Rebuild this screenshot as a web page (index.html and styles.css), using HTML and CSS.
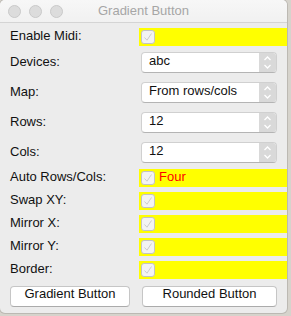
FILE: index.html
```html
<!DOCTYPE html>
<html>
<head>
<meta charset="utf-8">
<link rel="stylesheet" href="styles.css">
</head>
<body>
<div class="window">
  <div class="titlebar">
    <div class="lights"><span class="light"></span><span class="light"></span><span class="light"></span></div>
    <div class="title">Gradient Button</div>
    <div></div>
  </div>
  <div class="form">
    <div class="row row-check first">
      <div class="label">Enable Midi:</div>
      <div class="band"><span class="checkbox"><svg width="14" height="14" viewBox="0 0 14 14"><path d="M3.5 7.5 L6 10.2 L10.5 3.5" fill="none" stroke="#cdcdcd" stroke-width="1"/></svg></span></div>
    </div>
    <div class="row row-popup after-check">
      <div class="label">Devices:</div>
      <div class="popup"><span class="popup-text">abc</span><span class="stepper"><svg width="17" height="19" viewBox="0 0 17 19"><path d="M5.5 7 L8.5 4 L11.5 7 M5.5 12 L8.5 15 L11.5 12" fill="none" stroke="#ffffff" stroke-width="1.3"/></svg></span></div>
    </div>
    <div class="row row-popup">
      <div class="label">Map:</div>
      <div class="popup"><span class="popup-text">From rows/cols</span><span class="stepper"><svg width="17" height="19" viewBox="0 0 17 19"><path d="M5.5 7 L8.5 4 L11.5 7 M5.5 12 L8.5 15 L11.5 12" fill="none" stroke="#ffffff" stroke-width="1.3"/></svg></span></div>
    </div>
    <div class="row row-popup">
      <div class="label">Rows:</div>
      <div class="popup"><span class="popup-text">12</span><span class="stepper"><svg width="17" height="19" viewBox="0 0 17 19"><path d="M5.5 7 L8.5 4 L11.5 7 M5.5 12 L8.5 15 L11.5 12" fill="none" stroke="#ffffff" stroke-width="1.3"/></svg></span></div>
    </div>
    <div class="row row-popup">
      <div class="label">Cols:</div>
      <div class="popup"><span class="popup-text">12</span><span class="stepper"><svg width="17" height="19" viewBox="0 0 17 19"><path d="M5.5 7 L8.5 4 L11.5 7 M5.5 12 L8.5 15 L11.5 12" fill="none" stroke="#ffffff" stroke-width="1.3"/></svg></span></div>
    </div>
    <div class="row row-check after-popup">
      <div class="label">Auto Rows/Cols:</div>
      <div class="band"><span class="checkbox"><svg width="14" height="14" viewBox="0 0 14 14"><path d="M3.5 7.5 L6 10.2 L10.5 3.5" fill="none" stroke="#cdcdcd" stroke-width="1"/></svg></span><span class="band-text">Four</span></div>
    </div>
    <div class="row row-check">
      <div class="label">Swap XY:</div>
      <div class="band"><span class="checkbox"><svg width="14" height="14" viewBox="0 0 14 14"><path d="M3.5 7.5 L6 10.2 L10.5 3.5" fill="none" stroke="#cdcdcd" stroke-width="1"/></svg></span></div>
    </div>
    <div class="row row-check">
      <div class="label">Mirror X:</div>
      <div class="band"><span class="checkbox"><svg width="14" height="14" viewBox="0 0 14 14"><path d="M3.5 7.5 L6 10.2 L10.5 3.5" fill="none" stroke="#cdcdcd" stroke-width="1"/></svg></span></div>
    </div>
    <div class="row row-check">
      <div class="label">Mirror Y:</div>
      <div class="band"><span class="checkbox"><svg width="14" height="14" viewBox="0 0 14 14"><path d="M3.5 7.5 L6 10.2 L10.5 3.5" fill="none" stroke="#cdcdcd" stroke-width="1"/></svg></span></div>
    </div>
    <div class="row row-check">
      <div class="label">Border:</div>
      <div class="band"><span class="checkbox"><svg width="14" height="14" viewBox="0 0 14 14"><path d="M3.5 7.5 L6 10.2 L10.5 3.5" fill="none" stroke="#cdcdcd" stroke-width="1"/></svg></span></div>
    </div>
    <div class="buttons">
      <div class="button btn-gradient">Gradient Button</div>
      <div class="button btn-rounded">Rounded Button</div>
    </div>
  </div>
</div>
</body>
</html>
```

FILE: styles.css
```css
html, body {
  margin: 0;
  padding: 0;
}
body {
  width: 291px;
  height: 316px;
  background: #d6d3cc;
  font-family: "Liberation Sans", Arial, sans-serif;
  font-size: 13px;
  color: #111;
  overflow: hidden;
}
.window {
  width: 287px;
  height: 313px;
  background: #ececec;
  border-radius: 5px 5px 5px 5px;
  overflow: hidden;
  box-shadow: 0 0 0 1px rgba(0,0,0,0.12);
  display: flex;
  flex-direction: column;
}
.titlebar {
  height: 22px;
  background: linear-gradient(#f7f7f7, #f1f1f1);
  border-bottom: 1px solid #d4d4d4;
  display: grid;
  grid-template-columns: 1fr auto 1fr;
  align-items: center;
}
.lights {
  display: flex;
  gap: 8px;
  padding-left: 8px;
}
.light {
  width: 11px;
  height: 11px;
  border-radius: 50%;
  background: #dcdcdc;
  border: 0.5px solid #c9c9c9;
}
.title {
  color: #a6a6a6;
  font-size: 13px;
  line-height: 16px;
}
.form {
  display: flex;
  flex-direction: column;
  padding-top: 5px;
}
.row {
  display: grid;
  grid-template-columns: 139px 1fr;
  margin-top: 5px;
}
.row.first { margin-top: 0; }
.row.after-check { margin-top: 6px; }
.row.after-popup { margin-top: 6px; }
.row-popup { margin-top: 9px; height: 21px; }
.row-check { height: 18px; }
.label {
  padding-left: 10px;
  line-height: 15px;
  white-space: nowrap;
}
.row-popup .label {
  line-height: 19px;
}
.band {
  background: #ffff00;
  display: flex;
  align-items: flex-start;
}
.checkbox {
  width: 14px;
  height: 14px;
  margin: 2px 0 0 2px;
  box-sizing: border-box;
  border: 1px solid #c3c3c3;
  border-radius: 3px;
  background: #f3f3f3;
  display: flex;
}
.checkbox svg {
  margin: -1px;
}
.band-text {
  color: #ff0000;
  margin-left: 4px;
  line-height: 15px;
}
.popup {
  margin-left: 2px;
  width: 136px;
  height: 21px;
  box-sizing: border-box;
  background: #ffffff;
  border: 1px solid #d0d0d0;
  border-bottom-color: #b4b4b4;
  border-radius: 4px;
  display: flex;
  justify-content: space-between;
  overflow: hidden;
}
.popup-text {
  padding-left: 7px;
  line-height: 16px;
  color: #111;
}
.stepper {
  width: 17px;
  background: #d9d9d9;
  display: flex;
}
.buttons {
  display: flex;
  gap: 12px;
  padding-left: 10px;
  margin-top: 7px;
}
.button {
  height: 21px;
  box-sizing: border-box;
  background: #ffffff;
  border: 1px solid #c6c6c6;
  border-bottom-color: #ababab;
  border-radius: 4px;
  text-align: center;
  line-height: 14px;
  color: #111;
}
.btn-gradient { width: 120px; }
.btn-rounded { width: 135px; }
```
